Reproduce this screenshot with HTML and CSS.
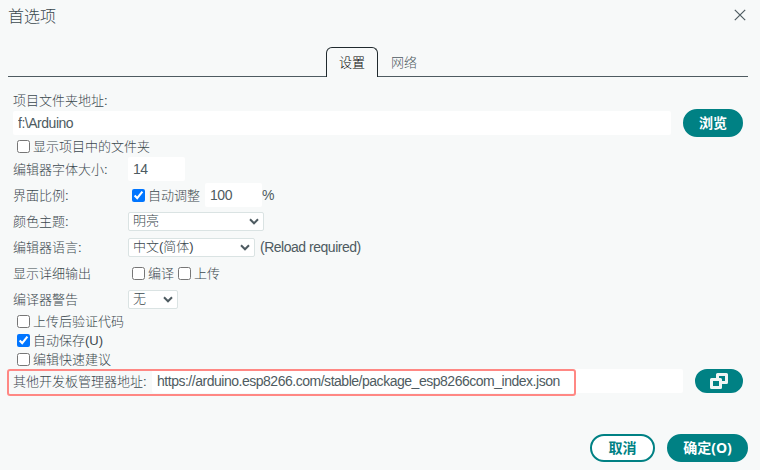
FILE: index.html
```html
<!DOCTYPE html>
<html lang="zh-CN">
<head>
<meta charset="utf-8">
<title>首选项</title>
<link rel="stylesheet" href="styles.css">
</head>
<body>
<main class="dialog">
  <header class="titlebar">
    <span class="title">首选项</span>
    <svg class="close" viewBox="0 0 12 12"><path d="M.8.8l10.4 10.4M11.2.8L.8 11.2"/></svg>
  </header>
  <nav class="tabs">
    <span class="tab active">设置</span>
    <span class="tab">网络</span>
  </nav>
  <section class="settings">
    <div class="row caption">项目文件夹地址:</div>
    <div class="row folder">
      <input class="field grow" type="text" value="f:\Arduino">
      <button class="btn browse">浏览</button>
    </div>
    <label class="row check"><input type="checkbox"><span>显示项目中的文件夹</span></label>
    <div class="row"><span class="name">编辑器字体大小:</span><input class="field small" type="text" value="14"></div>
    <div class="row"><span class="name">界面比例:</span>
      <label class="option"><input type="checkbox" checked><span>自动调整</span></label>
      <input class="field small scale" type="text" value="100"><span class="percent">%</span>
    </div>
    <div class="row"><span class="name">颜色主题:</span>
      <span class="select theme">明亮<svg viewBox="0 0 10 7"><path d="M1 1.3l4 4 4-4"/></svg></span>
    </div>
    <div class="row"><span class="name">编辑器语言:</span>
      <span class="select language">中文(简体)<svg viewBox="0 0 10 7"><path d="M1 1.3l4 4 4-4"/></svg></span>
      <span class="reload">(Reload required)</span>
    </div>
    <div class="row"><span class="name">显示详细输出</span>
      <label class="option"><input type="checkbox"><span>编译</span></label>
      <label class="option second"><input type="checkbox"><span>上传</span></label>
    </div>
    <div class="row"><span class="name">编译器警告</span>
      <span class="select warnings">无<svg viewBox="0 0 10 7"><path d="M1 1.3l4 4 4-4"/></svg></span>
    </div>
    <label class="row check"><input type="checkbox"><span>上传后验证代码</span></label>
    <label class="row check"><input type="checkbox" checked><span>自动保存(U)</span></label>
    <label class="row check"><input type="checkbox"><span>编辑快速建议</span></label>
    <div class="row boards">
      <span class="boards-name">其他开发板管理器地址:</span>
      <input class="field grow url" type="text" value="https://arduino.esp8266.com/stable/package_esp8266com_index.json">
      <button class="btn windows"><svg viewBox="0 0 18 16"><path d="M7.5 5V1.5h9v8H12"/><path d="M1.5 6.5h9v8h-9z"/><path class="pane" d="M3.5 9.7h5v2h-5z"/></svg></button>
      <span class="highlight"></span>
    </div>
  </section>
  <footer class="actions">
    <button class="btn outline">取消</button>
    <button class="btn confirm">确定(O)</button>
  </footer>
</main>
</body>
</html>
```
FILE: styles.css
```css
* { box-sizing: border-box; }
body {
  margin: 0;
  background: #f7f9f9;
  color: #3b484e;
  font: 300 13px/18px "Liberation Sans", "Noto Sans CJK SC", sans-serif;
}
input, button { font: inherit; color: inherit; margin: 0; }
.dialog { width: 760px; height: 470px; padding: 0 12px 0 8px; overflow: hidden; }
.titlebar { height: 47px; display: flex; justify-content: space-between; align-items: flex-start; }
.title { font-size: 16px; line-height: 24px; margin-top: 5px; }
.close { width: 12px; height: 12px; margin: 9px 2px 0 0; fill: none; stroke: #4e5b61; stroke-width: 1.2; }
.tabs { height: 30px; display: flex; justify-content: center; border-bottom: 1px solid #4e5b61; }
.tab { width: 52px; height: 30px; padding-top: 1px; line-height: 30px; text-align: center; color: #4e5b61; }
.active {
  background: #f7f9f9;
  color: #000;
  border: 1px solid #202a2e;
  border-bottom: 0;
  border-radius: 6px 6px 0 0;
  padding-top: 0;
}
.settings { padding: 15px 0 0 5px; }
.row { height: 26px; display: flex; align-items: center; white-space: nowrap; }
.caption { height: 17px; }
.caption, .name, .check span, .option span, .boards-name { padding-top: 1px; }
.folder { height: 28px; margin-right: 5px; }
.field {
  height: 24px;
  border: 0;
  border-radius: 2px;
  background: #fff;
  padding: 0 5px 1px;
  outline: 0;
}
.field, .percent, .reload { font-size: 14px; letter-spacing: -.48px; color: #4e5b61; }
.grow { flex: 1; min-width: 0; }
.name { width: 115px; }
.small { width: 57px; }
.check { height: 19px; }
.check input, .option input { width: 13px; height: 13px; margin: 0 3px 0 4px; accent-color: #0075ff; }
.option { display: flex; align-items: center; }
.second input { margin-left: 4px; }
.scale { margin-left: 5px; }
.reload { margin-left: 5px; }
.select {
  height: 19px;
  display: flex;
  align-items: center;
  justify-content: space-between;
  background: #fff;
  border: 1px solid #dae3e3;
  border-radius: 2px;
  padding: 0 4px;
}
.select svg { width: 10px; height: 7px; fill: none; stroke: #4e5b61; stroke-width: 2; }
.theme { width: 136px; }
.language { width: 127px; }
.warnings { width: 50px; }
.btn {
  height: 28px;
  border: 2px solid #008184;
  border-radius: 14px;
  background: #008184;
  color: #fff;
  font-weight: 700;
  font-size: 14px;
  line-height: 22px;
  padding: 0;
}
.browse { width: 60px; margin-left: 12px; }
.boards { position: relative; height: 24px; margin-right: 5px; }
.boards-name { width: 139px; }
.windows { width: 48px; height: 24px; margin-left: 12px; display: flex; align-items: center; justify-content: center; }
.windows svg { width: 18px; height: 16px; fill: #008184; stroke: #f0f5f5; stroke-width: 3; stroke-linejoin: round; }
.windows .pane { fill: #008184; stroke: none; }
.highlight {
  position: absolute;
  left: -6px;
  top: 0;
  width: 569px;
  height: 27px;
  border: 2px solid #ff8884;
  border-radius: 3px;
}
.actions { display: flex; justify-content: flex-end; gap: 12px; margin-top: 41px; }
.outline { width: 65px; background: #fff; color: #008184; }
.confirm { width: 81px; font-family: "Open Sans", "Noto Sans CJK SC", sans-serif; }
```
